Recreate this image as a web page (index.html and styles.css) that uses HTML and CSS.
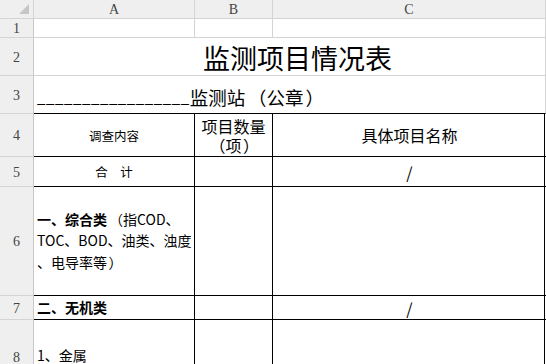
FILE: index.html
```html
<!DOCTYPE html>
<html lang="zh">
<head>
<meta charset="utf-8">
<link rel="stylesheet" href="styles.css">
</head>
<body>
<div class="sheet">
  <div class="hd corner"><span class="tri"></span></div>
  <div class="hd col">A</div>
  <div class="hd col">B</div>
  <div class="hd col colc">C</div>

  <div class="hd row r1">1</div>
  <div class="cell r1"></div>
  <div class="cell r1"></div>
  <div class="cell r1 lastg"></div>

  <div class="hd row r2">2</div>
  <div class="cell r2 span3 title">监测项目情况表</div>

  <div class="hd row r3">3</div>
  <div class="cell r3 span3 station"><span class="blank">_________________</span><span>监测站<span class="po">（</span>公章<span class="pc">）</span></span></div>

  <div class="hd row r4">4</div>
  <div class="cell r4 t center small">调查内容</div>
  <div class="cell r4 t center big two"><div>项目数量<br><span class="po">（</span>项<span class="pc">）</span></div></div>
  <div class="cell r4 t tc center big">具体项目名称</div>

  <div class="hd row r5">5</div>
  <div class="cell r5 t center small">合　计</div>
  <div class="cell r5 t"></div>
  <div class="cell r5 t tc center big">/</div>

  <div class="hd row r6">6</div>
  <div class="cell r6 t left mid"><div><b>一、综合类</b><span class="po">（</span>指COD、<br>TOC、BOD、油类、浊度<br>、电导率等<span class="pc">）</span></div></div>
  <div class="cell r6 t"></div>
  <div class="cell r6 t tc"></div>

  <div class="hd row r7">7</div>
  <div class="cell r7 t left mid"><b>二、无机类</b></div>
  <div class="cell r7 t"></div>
  <div class="cell r7 t tc center big">/</div>

  <div class="hd row r8">8</div>
  <div class="cell r8 t left mid">1、金属</div>
  <div class="cell r8 t"></div>
  <div class="cell r8 t tc"></div>
</div>
</body>
</html>
```
FILE: styles.css
```css
* { box-sizing: border-box; }
html, body { margin: 0; padding: 0; background: #fff; overflow: hidden; }
body { width: 546px; height: 364px; }

.sheet {
  display: grid;
  grid-template-columns: 34px 161px 78px 272px 1px;
  grid-template-rows: 19px 19px 38px 38px 43px 30px 109px 24px 74px;
  font-family: "Noto Sans CJK SC", "Noto Sans", sans-serif;
  color: #000;
}

.hd {
  background: #efefef;
  color: #444;
  font-family: "Liberation Serif", "DejaVu Serif", serif;
  font-size: 14px;
  display: flex;
  align-items: center;
  justify-content: center;
  border-right: 1px solid #d4d4d4;
  border-bottom: 1px solid #d4d4d4;
}
.corner { position: relative; }
.tri {
  position: absolute;
  right: 4px;
  bottom: 4px;
  width: 0;
  height: 0;
  border-left: 10px solid transparent;
  border-bottom: 10px solid #c6c6c6;
}
.col { padding-top: 1px; }
.colc { grid-column: 4 / 6; }
.row { grid-column: 1; border-right-color: #c8c8c8; padding-top: 2px; }

.cell {
  border-right: 1px solid #d4d4d4;
  border-bottom: 1px solid #d4d4d4;
  display: flex;
  align-items: center;
  overflow: hidden;
  white-space: nowrap;
}
.lastg { grid-column: 4 / 6; }
.span3 { grid-column: 2 / 6; }

.title {
  justify-content: center;
  font-size: 27px;
  padding-left: 16px;
  padding-top: 2px;
}
.station {
  font-size: 18.5px;
  padding-left: 3px;
  padding-top: 4px;
  border-bottom: 1px solid #000;
}
.blank { font-size: 15px; letter-spacing: 0.6px; }

.po, .pc { display: inline-block; width: 1.15em; line-height: 1; }
.po { text-align: right; }
.pc { text-align: left; padding-left: 0.1em; }

.t { border-right-color: #000; border-bottom-color: #000; }
.tc { grid-column: 4 / 6; border-right: none; position: relative; }
.tc::after {
  content: "";
  position: absolute;
  top: 0; bottom: -1px;
  right: 1px;
  width: 1px;
  background: #000;
}

.center { justify-content: center; text-align: center; }
.small { font-size: 12.5px; }
.big { font-size: 16px; }
.two { line-height: 19px; padding-top: 1px; }
.left { padding-left: 3px; font-size: 14px; }
.mid { line-height: 21.5px; }
.r8.left { align-items: flex-start; padding-top: 25px; }
```
